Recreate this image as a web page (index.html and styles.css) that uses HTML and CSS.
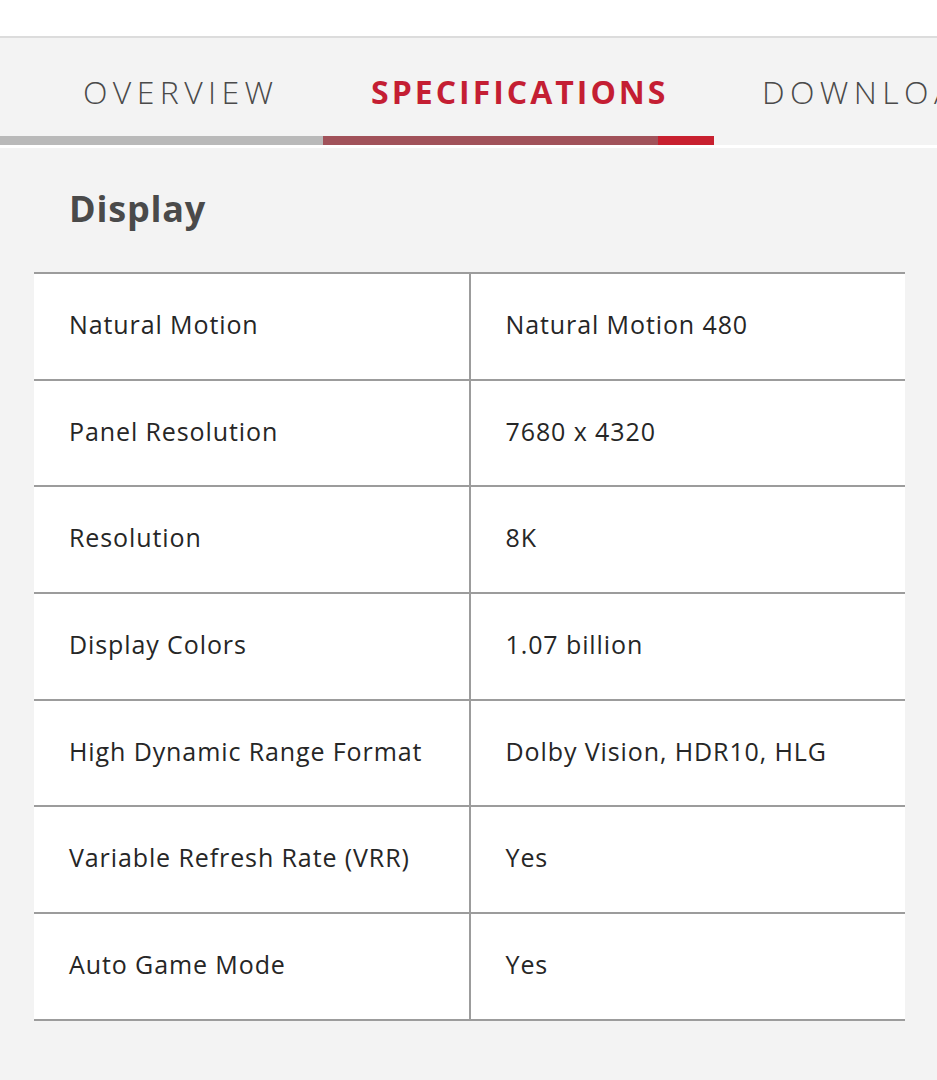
FILE: index.html
```html
<!DOCTYPE html>
<html lang="en">
<head>
<meta charset="utf-8">
<title>Specifications</title>
<link rel="stylesheet" href="styles.css">
</head>
<body>
<header class="topbar"></header>
<nav class="tabs">
  <div class="tab-list">
    <a class="tab">OVERVIEW</a>
    <a class="tab tab-active">SPECIFICATIONS</a>
    <a class="tab">DOWNLOADS</a>
  </div>
  <div class="track">
    <span class="seg seg-gray"></span>
    <span class="seg seg-muted"></span>
    <span class="seg seg-red"></span>
  </div>
</nav>
<main class="spec">
  <h2 class="spec-title">Display</h2>
  <table class="spec-table">
    <tr><td>Natural Motion</td><td>Natural Motion 480</td></tr>
    <tr><td>Panel Resolution</td><td>7680 x 4320</td></tr>
    <tr><td>Resolution</td><td>8K</td></tr>
    <tr><td>Display Colors</td><td>1.07 billion</td></tr>
    <tr><td>High Dynamic Range Format</td><td>Dolby Vision, HDR10, HLG</td></tr>
    <tr><td>Variable Refresh Rate (VRR)</td><td>Yes</td></tr>
    <tr><td>Auto Game Mode</td><td>Yes</td></tr>
  </table>
</main>
</body>
</html>
```
FILE: styles.css
```css
html, body {
  margin: 0;
  padding: 0;
}
body {
  background: #f3f3f3;
  font-family: "Open Sans", "Liberation Sans", sans-serif;
  color: #2b2b2b;
  width: 937px;
  overflow: hidden;
}
.topbar {
  height: 36px;
  background: #ffffff;
  border-bottom: 2px solid #dcdcdc;
}
.tabs {
  overflow: hidden;
  border-bottom: 3px solid #ffffff;
}
.tab-list {
  display: flex;
  white-space: nowrap;
  padding-left: 36px;
  height: 98px;
  align-items: center;
}
.tab {
  flex: none;
  box-sizing: border-box;
  padding: 8px 0 0 47px;
  font-size: 32px;
  font-weight: 300;
  letter-spacing: 5.4px;
  color: #4a4a4a;
}
.tab:first-child {
  width: 288px;
}
.tab-active {
  width: 391px;
  font-weight: 700;
  letter-spacing: 3px;
  color: #c41e33;
}
.track {
  display: flex;
  height: 9px;
}
.seg {
  display: block;
  flex: none;
  height: 100%;
}
.seg-gray { width: 323px; background: #b9b9b9; }
.seg-muted { width: 335px; background: #a1525a; }
.seg-red { width: 56px; background: #c8202f; }
.spec {
  padding: 43px 32px 60px 34px;
}
.spec-title {
  margin: 0 0 45px 35px;
  font-size: 36px;
  line-height: 36px;
  font-weight: 700;
  letter-spacing: 0.8px;
  color: #4a4a4a;
}
.spec-table {
  width: 871px;
  border-collapse: collapse;
  background: #ffffff;
  table-layout: fixed;
}
.spec-table td {
  width: 50%;
  height: 106.7px;
  box-sizing: border-box;
  padding: 0 20px 5px 35px;
  border-top: 2px solid #9c9c9c;
  border-bottom: 2px solid #9c9c9c;
  font-size: 25px;
  letter-spacing: 0.9px;
  color: #262626;
  vertical-align: middle;
}
.spec-table td + td {
  border-left: 2px solid #9c9c9c;
  padding-left: 35px;
}
```
